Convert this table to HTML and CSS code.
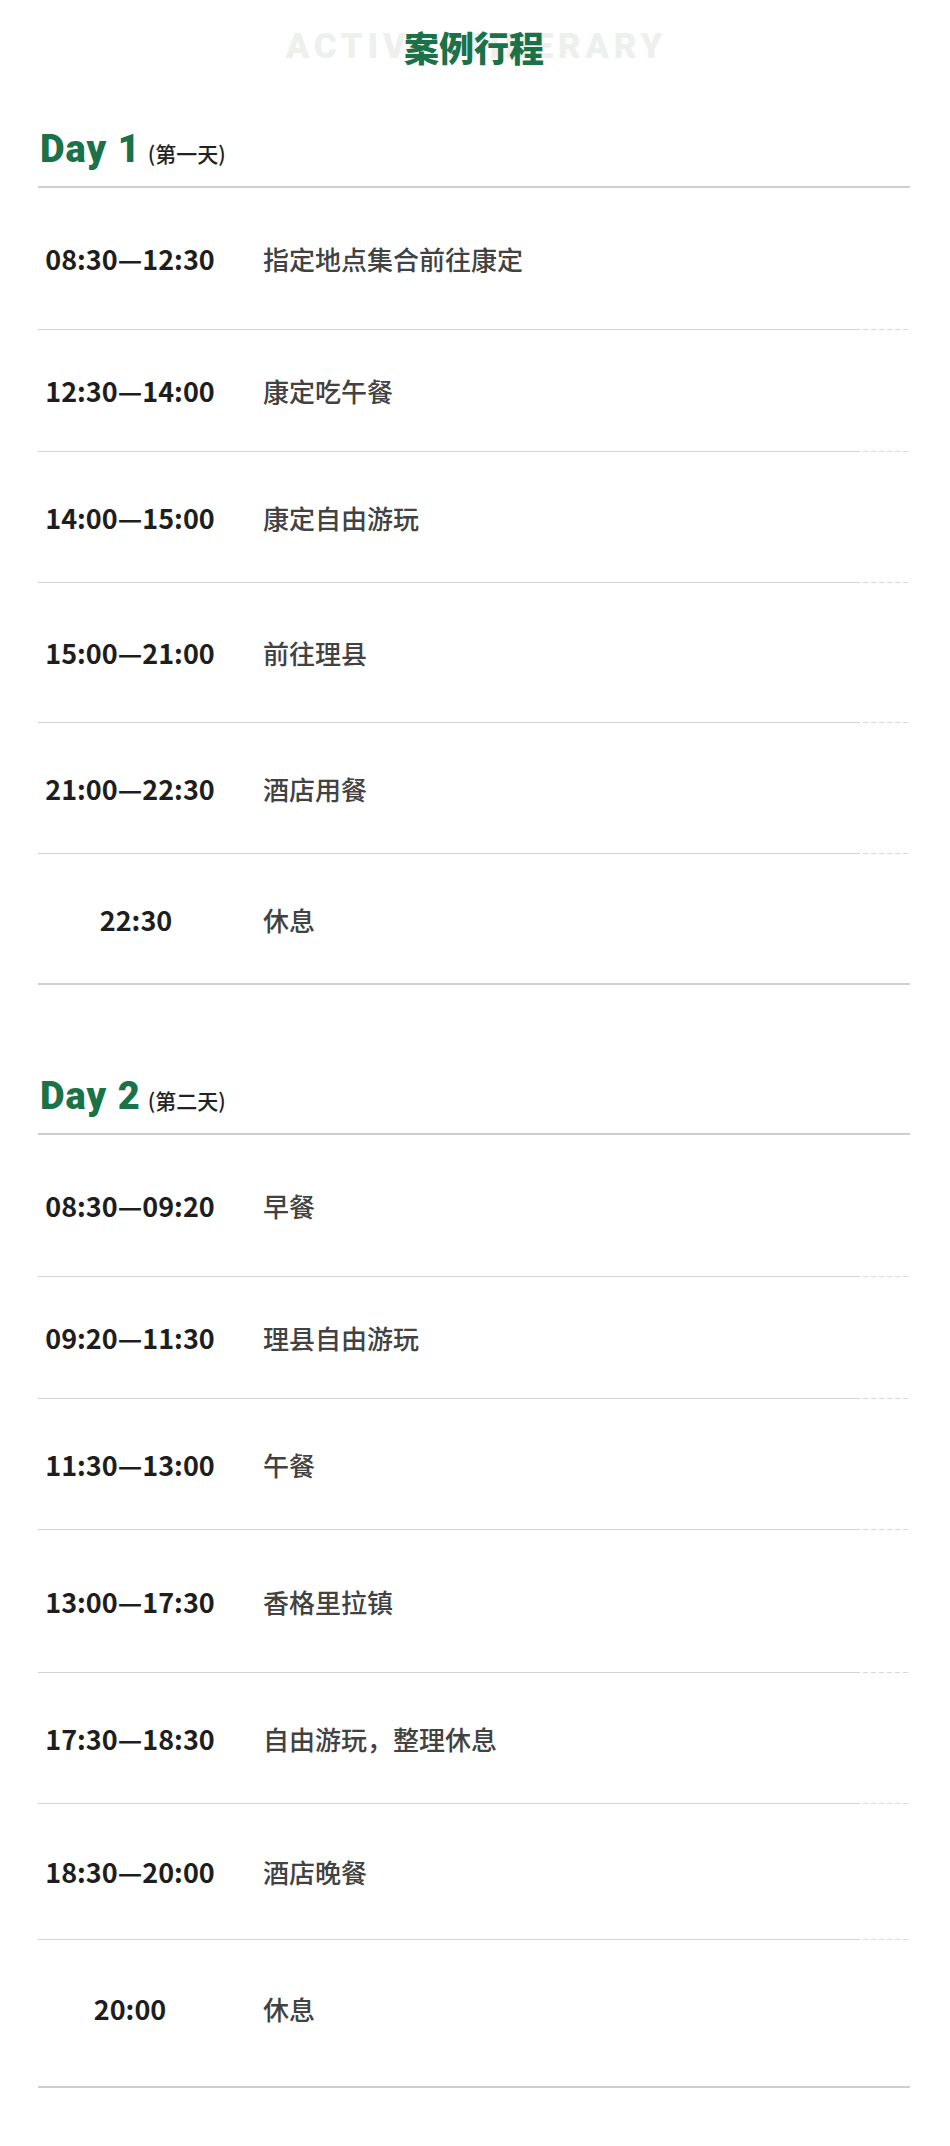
FILE: index.html
```html
<!DOCTYPE html>
<html lang="zh-CN">
  <head>
    <meta charset="UTF-8" />
    <meta name="viewport" content="width=device-width, initial-scale=1.0" />
    <title>案例行程</title>
    <link rel="stylesheet" href="styles.css">
  </head>
  <body>
    <div class="page">
      <header class="title">
        <span class="title-bg">ACTIVE ITINERARY</span>
        <h1 class="title-text">案例行程</h1>
      </header>

      <section class="day">
        <h2 class="day-head"><span class="day-num">Day 1</span><span class="day-cn">(第一天)</span></h2>
        <div class="row row--first"><span class="time">08:30—12:30</span><span class="desc">指定地点集合前往康定</span></div>
        <div class="row row--short"><span class="time">12:30—14:00</span><span class="desc">康定吃午餐</span></div>
        <div class="row"><span class="time">14:00—15:00</span><span class="desc">康定自由游玩</span></div>
        <div class="row row--tall"><span class="time">15:00—21:00</span><span class="desc">前往理县</span></div>
        <div class="row"><span class="time">21:00—22:30</span><span class="desc">酒店用餐</span></div>
        <div class="row"><span class="time time--shift">22:30</span><span class="desc">休息</span></div>
      </section>

      <section class="day">
        <h2 class="day-head"><span class="day-num">Day 2</span><span class="day-cn">(第二天)</span></h2>
        <div class="row row--first"><span class="time">08:30—09:20</span><span class="desc">早餐</span></div>
        <div class="row row--short"><span class="time">09:20—11:30</span><span class="desc">理县自由游玩</span></div>
        <div class="row"><span class="time">11:30—13:00</span><span class="desc">午餐</span></div>
        <div class="row row--taller"><span class="time">13:00—17:30</span><span class="desc">香格里拉镇</span></div>
        <div class="row"><span class="time">17:30—18:30</span><span class="desc">自由游玩，整理休息</span></div>
        <div class="row row--roomy"><span class="time">18:30—20:00</span><span class="desc">酒店晚餐</span></div>
        <div class="row row--end"><span class="time">20:00</span><span class="desc">休息</span></div>
      </section>
    </div>
  </body>
</html>
```

FILE: styles.css
```css
body {
  margin: 0;
  background: #fff;
  font-family: "Noto Sans CJK SC", "Noto Sans", sans-serif;
}

.page {
  padding: 0 40px 56px 38px;
}

/* Heading with the faint english word behind it */
.title {
  display: grid;
  place-items: center;
  height: 92px;
}

.title > * {
  grid-area: 1 / 1;
}

.title-bg {
  font: 900 35px/1 Roboto, "Liberation Sans", sans-serif;
  letter-spacing: 4.6px;
  margin-right: -4.6px;
  color: #eef0ee;
}

.title-text {
  margin: 0;
  font: 900 35px/1 "Noto Sans CJK SC", sans-serif;
  color: #1b7148;
}

/* Day blocks */
.day + .day {
  margin-top: 54px;
}

.day-head {
  display: flex;
  align-items: baseline;
  margin: 0;
  padding: 38px 0 18px 2px;
  border-bottom: 2px solid #cfcfcf;
}

.day-num {
  font: 900 38px/38px Roboto, "Liberation Sans", sans-serif;
  letter-spacing: 1px;
  color: #1b7148;
}

.day-cn {
  margin-left: 7px;
  font: 500 21px/1 "Noto Sans CJK SC", sans-serif;
  color: #222;
}

/* Rows: solid rule that turns dashed near the right edge */
.row {
  display: flex;
  align-items: center;
  box-sizing: border-box;
  height: 131px;
  background:
    linear-gradient(#d3d3d3, #d3d3d3) left bottom / calc(100% - 50px) 1px no-repeat,
    repeating-linear-gradient(to right, transparent 0 3px, #d9d9d9 3px 8px) right bottom / 50px 1px no-repeat;
}

.row--first {
  height: 142px;
}

.row--short {
  height: 122px;
}

.row--roomy {
  height: 136px;
}

.row--tall {
  height: 140px;
}

.row--taller {
  height: 143px;
}

.row--end {
  height: 148px;
  padding-bottom: 10px;
}

.row:last-child {
  background: linear-gradient(#cfcfcf, #cfcfcf) left bottom / 100% 2px no-repeat;
}

.time {
  box-sizing: border-box;
  width: 184px;
  text-align: center;
  font-size: 27px;
  font-weight: 700;
  line-height: 40px;
  color: #1e1e1e;
}

.time--shift {
  padding-left: 12px;
}

.desc {
  margin-left: 41px;
  font-size: 26px;
  font-weight: 500;
  line-height: 40px;
  color: #424242;
}
```
